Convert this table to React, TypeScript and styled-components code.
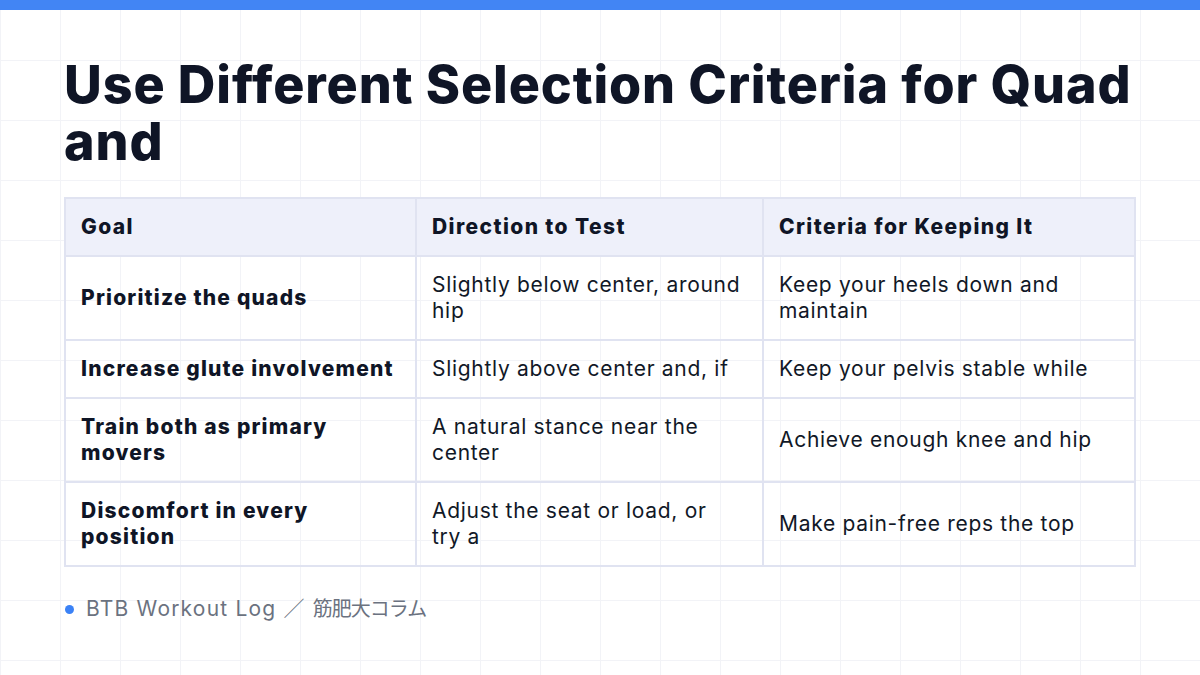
import React from "react";
import styled, { createGlobalStyle } from "styled-components";

const GlobalStyle = createGlobalStyle`
  html, body {
    margin: 0;
    padding: 0;
  }
  body {
    font-family: "Inter", "Noto Sans CJK JP", sans-serif;
    color: #111827;
  }
`;

const Slide = styled.div`
  width: 1200px;
  height: 675px;
  overflow: hidden;
  background-color: #ffffff;
  background-image: linear-gradient(to right, #f2f3f7 1px, transparent 1px),
    linear-gradient(to bottom, #f2f3f7 1px, transparent 1px);
  background-size: 60px 60px;
  display: flex;
  flex-direction: column;
`;

const TopBar = styled.div`
  height: 10px;
  background-color: #4285f4;
  flex-shrink: 0;
`;

const Content = styled.div`
  padding: 46px 64px 0;
  display: flex;
  flex-direction: column;
`;

const Title = styled.h1`
  margin: 0;
  font-size: 52px;
  line-height: 57px;
  font-weight: 800;
  letter-spacing: 0.9px;
  color: #0f1526;
`;

const Table = styled.table`
  margin-top: 27px;
  width: 100%;
  border-collapse: collapse;
  table-layout: fixed;
`;

const HeadCell = styled.th`
  background-color: #eef0fa;
  border: 2px solid #e0e3f1;
  padding: 15px 20px 15px 15px;
  text-align: left;
  font-size: 21px;
  line-height: 26px;
  font-weight: 800;
  letter-spacing: 1.4px;
  color: #0f1526;
`;

const Cell = styled.td<{ $strong?: boolean }>`
  border: 2px solid #e0e3f1;
  padding: 15px 20px 15px 15px;
  font-size: 21px;
  line-height: 26px;
  font-weight: ${(p) => (p.$strong ? 800 : 400)};
  letter-spacing: ${(p) => (p.$strong ? "1.2px" : "0.7px")};
  color: ${(p) => (p.$strong ? "#0f1526" : "#111827")};
  vertical-align: middle;
`;

const Footer = styled.div`
  margin-top: 29px;
  display: flex;
  align-items: center;
  gap: 12px;
  padding-left: 1px;
  font-size: 21px;
  line-height: 26px;
  letter-spacing: 1.2px;
  color: #6b7280;
`;

const Dot = styled.span`
  width: 9px;
  height: 9px;
  border-radius: 50%;
  background-color: #3b82f6;
`;

const Kanji = styled.span`
  font-size: 20px;
  letter-spacing: -1px;
`;

const rows = [
  ["Prioritize the quads", "Slightly below center, around hip", "Keep your heels down and maintain"],
  ["Increase glute involvement", "Slightly above center and, if", "Keep your pelvis stable while"],
  ["Train both as primary movers", "A natural stance near the center", "Achieve enough knee and hip"],
  ["Discomfort in every position", "Adjust the seat or load, or try\u00a0a", "Make pain-free reps the top"],
];

export default function App() {
  return (
    <>
      <GlobalStyle />
      <Slide>
        <TopBar />
        <Content>
          <Title>Use Different Selection Criteria for Quad and</Title>
          <Table>
            <colgroup>
              <col style={{ width: 351 }} />
              <col style={{ width: 347 }} />
              <col />
            </colgroup>
            <thead>
              <tr>
                <HeadCell>Goal</HeadCell>
                <HeadCell>Direction to Test</HeadCell>
                <HeadCell>Criteria for Keeping It</HeadCell>
              </tr>
            </thead>
            <tbody>
              {rows.map((r) => (
                <tr key={r[0]}>
                  <Cell $strong>{r[0]}</Cell>
                  <Cell>{r[1]}</Cell>
                  <Cell>{r[2]}</Cell>
                </tr>
              ))}
            </tbody>
          </Table>
          <Footer>
            <Dot />
            <span>
              BTB Workout Log ／ <Kanji>筋肥大コラム</Kanji>
            </span>
          </Footer>
        </Content>
      </Slide>
    </>
  );
}
